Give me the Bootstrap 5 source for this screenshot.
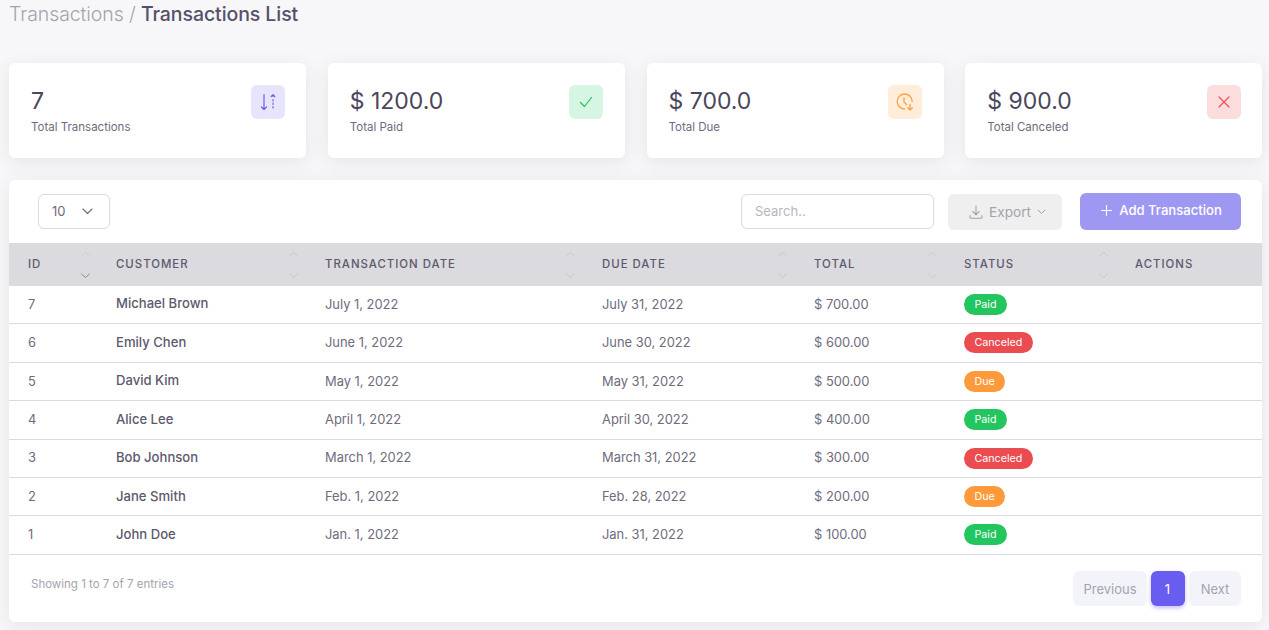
<!DOCTYPE html>
<html lang="en">
<head>
<meta charset="utf-8">
<title>Transactions List</title>
<link href="https://cdn.jsdelivr.net/npm/bootstrap@5.3.0/dist/css/bootstrap.min.css" rel="stylesheet">
<style>
html,body{height:630px;overflow:hidden}
body{background:#f7f7f9;font-family:"Inter","Liberation Sans",sans-serif;color:#4b465c;font-size:13px}
.page-wrap{padding:0 7px 0 9px}
.crumb{font-size:19.5px;font-weight:500;line-height:28px;margin:0 0 35px 0;color:#555168;letter-spacing:-.08px}
.crumb span{font-weight:300;color:#a5a3ae}
.stat-grid{display:grid;grid-template-columns:repeat(4,297px);gap:21.75px;margin-bottom:22px}
.stat-box,.list-box{background:#fff;border:0;border-radius:6px;box-shadow:0 4px 18px rgba(75,70,92,.1)}
.stat-box{height:95px;padding:22px 21.5px 22px 22px}
.stat-num{font-size:23px;line-height:30px;font-weight:400;color:#4b465c;margin-bottom:3px;margin-top:1px}
.stat-cap{font-size:11.5px;line-height:16px;color:#6f6b7d}
.stat-ico{width:34px;height:34px;border-radius:6px;display:flex;align-items:center;justify-content:center}
.ico-p{background:#e7e5fc;color:#6a5ff0}
.ico-g{background:#d6f5e3;color:#22c55e}
.ico-o{background:#ffecd9;color:#ff9f43}
.ico-r{background:#fbdddd;color:#ea5455}
.list-box{height:442px}
.tool-row{height:63px;padding:14px 21px 13px 29px}
.len-box{width:72px;height:35px;border:1px solid #dbdade;border-radius:6px;padding:0 16px 0 13px;color:#6f6b7d;font-size:13px}
.find-box{width:193px;height:35px;border:1px solid #dbdade;border-radius:6px;padding:0 13px 2px;font-size:13px;color:#4b465c;margin-right:14px;background:#fff;outline:0}
.find-box::placeholder{color:#b7b5be;opacity:1}
.exp-btn{width:114px;height:36px;background:#efefef;border:0;border-radius:6px;color:#a5a3ae;font-size:13.6px;margin-right:18px;font-weight:400;padding:0 0 0 4px;gap:5px}
.exp-chev{margin-left:1px}
.add-btn{width:161px;height:37px;background:#9f98f2;border:0;border-radius:6px;color:#fff;font-size:13.1px;font-weight:500;margin-top:-1px;padding:0 0 2px 2px;gap:7px}
.tx-table{table-layout:fixed;width:100%;margin:0;--bs-table-bg:transparent;color:#4b465c}
.tx-table th,.tx-table td{padding:0 19px;vertical-align:middle}
.tx-table thead th{background:#dbdade;height:42.6px;font-size:11.4px;font-weight:500;letter-spacing:1px;color:#5d596c;border:0;position:relative;text-transform:uppercase}
.tx-table tbody td{height:38.4px;font-size:12.9px;color:#6f6b7d;border-bottom:1px solid #dbdade;padding-bottom:.6px}
.tx-table tbody td.who{font-weight:500;color:#5d596c;font-size:13.1px}
.w1{width:88px}.w2{width:209px}.w3{width:277px}.w4{width:212px}.w5{width:150px}.w6{width:171px}
.sort-ico{position:absolute;right:7px;top:8px;width:11px;height:28px;color:#c9c7cf}
.tx-table thead th:first-child .sort-ico{right:6px}
.pill{display:inline-block;font-size:10.7px;font-weight:400;line-height:21px;height:21px;padding:0 10.5px;border-radius:11px;color:#fff;vertical-align:middle}
.pill-g{background:#22c55e}.pill-r{background:#ea4c50}.pill-o{background:#ff9a3c}
.foot-row{padding:16px 21px 0 22px}
.foot-note{font-size:11.5px;color:#a5a3ae;padding-top:5px}
.pg-btn{height:35px;border-radius:6px;background:#f3f4f9;color:#a5a3ae;font-size:13px;display:flex;align-items:center;justify-content:center;padding:2px 0 0;margin-left:4px;text-decoration:none}
.pg-prev{width:74px}.pg-next{width:52px}
.pg-btn.cur{background:#685dee;color:#fff;width:34px;padding:2px 1px 0 0;box-shadow:0 2px 4px rgba(104,93,238,.4);font-weight:400}
</style>
</head>
<body>
<div class="page-wrap">
  <h4 class="crumb"><span>Transactions /</span> Transactions List</h4>

  <div class="stat-grid">
    <div class="stat-box d-flex justify-content-between">
      <div><p class="stat-num">7</p><div class="stat-cap">Total Transactions</div></div>
      <div class="stat-ico ico-p"><svg width="18" height="20" viewBox="0 0 18 20" fill="none" stroke="currentColor" stroke-width="1.2" stroke-linecap="round" stroke-linejoin="round"><path d="M5 2.500v15M2.500 15 5 17.500 7.500 15"/><path d="M14 3v1.500M12.200 4.500 14 2.700l1.800 1.800"/><path d="M14 7.500v1.500M14 11v1.500M14 14.500V16"/></svg></div>
    </div>
    <div class="stat-box d-flex justify-content-between">
      <div><p class="stat-num">$ 1200.0</p><div class="stat-cap">Total Paid</div></div>
      <div class="stat-ico ico-g"><svg width="14" height="12" viewBox="0 0 14 12" fill="none" stroke="currentColor" stroke-width="1.2" stroke-linecap="round" stroke-linejoin="round"><path d="M1.500 6.500 5.500 10.500 12.500 1.500"/></svg></div>
    </div>
    <div class="stat-box d-flex justify-content-between">
      <div><p class="stat-num">$ 700.0</p><div class="stat-cap">Total Due</div></div>
      <div class="stat-ico ico-o"><svg width="20" height="20" viewBox="0 0 20 20" fill="none" stroke="currentColor" stroke-width="1.3" stroke-linecap="round" stroke-linejoin="round"><path d="M17.200 9.500A7.500 7.500 0 1 0 9.500 17"/><path d="M9 6v4l2.500 2.500"/><path d="M15 12.500V18M12.800 15.800 15 18l2.200-2.200"/></svg></div>
    </div>
    <div class="stat-box d-flex justify-content-between">
      <div><p class="stat-num">$ 900.0</p><div class="stat-cap">Total Canceled</div></div>
      <div class="stat-ico ico-r"><svg width="14" height="14" viewBox="0 0 14 14" fill="none" stroke="currentColor" stroke-width="1.3" stroke-linecap="round"><path d="M2 2l10 10M12 2 2 12"/></svg></div>
    </div>
  </div>

  <div class="list-box">
    <div class="tool-row d-flex align-items-start">
      <div class="len-box d-flex align-items-center justify-content-between">10 <svg width="11" height="7" viewBox="0 0 11 7" fill="none" stroke="currentColor" stroke-width="1.1" stroke-linecap="round" stroke-linejoin="round"><path d="M1 1l4.500 4.500L10 1"/></svg></div>
      <div class="ms-auto d-flex align-items-start">
        <input class="find-box" type="text" placeholder="Search..">
        <button class="exp-btn d-flex align-items-center justify-content-center" type="button"><svg width="16" height="16" viewBox="0 0 16 16" fill="none" stroke="currentColor" stroke-width="1.1" stroke-linecap="round" stroke-linejoin="round"><path d="M8 2v8.500M4.800 7.500 8 10.800l3.200-3.300M2 11.500v1.700A1 1 0 0 0 3 14.200h10a1 1 0 0 0 1-1v-1.700"/></svg>Export<svg class="exp-chev" width="9" height="6" viewBox="0 0 9 6" fill="none" stroke="currentColor" stroke-width="1" stroke-linecap="round" stroke-linejoin="round"><path d="M1 1l3.500 3.500L8 1"/></svg></button>
        <button class="add-btn d-flex align-items-center justify-content-center" type="button"><svg width="11" height="11" viewBox="0 0 11 11" fill="none" stroke="currentColor" stroke-width="1.1" stroke-linecap="round"><path d="M5.500 .5v10M.5 5.500h10"/></svg>Add Transaction</button>
      </div>
    </div>

    <table class="table tx-table">
      <colgroup><col class="w1"><col class="w2"><col class="w3"><col class="w4"><col class="w5"><col class="w6"><col></colgroup>
      <thead><tr>
        <th>ID<svg class="sort-ico" viewBox="0 0 11 28" fill="none" stroke-width="1" stroke-linecap="round" stroke-linejoin="round"><path stroke="#cfcdd5" d="M1.500 5 5.500 1.500 9.500 5"/><path stroke="#8f8c99" d="M1.500 23 5.500 26.500 9.500 23"/></svg></th>
        <th>Customer<svg class="sort-ico" viewBox="0 0 11 28" fill="none" stroke="currentColor" stroke-width="1" stroke-linecap="round" stroke-linejoin="round"><path d="M1.500 5 5.500 1.500 9.500 5M1.500 23 5.500 26.500 9.500 23"/></svg></th>
        <th>Transaction Date<svg class="sort-ico" viewBox="0 0 11 28" fill="none" stroke="currentColor" stroke-width="1" stroke-linecap="round" stroke-linejoin="round"><path d="M1.500 5 5.500 1.500 9.500 5M1.500 23 5.500 26.500 9.500 23"/></svg></th>
        <th>Due Date<svg class="sort-ico" viewBox="0 0 11 28" fill="none" stroke="currentColor" stroke-width="1" stroke-linecap="round" stroke-linejoin="round"><path d="M1.500 5 5.500 1.500 9.500 5M1.500 23 5.500 26.500 9.500 23"/></svg></th>
        <th>Total<svg class="sort-ico" viewBox="0 0 11 28" fill="none" stroke="currentColor" stroke-width="1" stroke-linecap="round" stroke-linejoin="round"><path d="M1.500 5 5.500 1.500 9.500 5M1.500 23 5.500 26.500 9.500 23"/></svg></th>
        <th>Status<svg class="sort-ico" viewBox="0 0 11 28" fill="none" stroke="currentColor" stroke-width="1" stroke-linecap="round" stroke-linejoin="round"><path d="M1.500 5 5.500 1.500 9.500 5M1.500 23 5.500 26.500 9.500 23"/></svg></th>
        <th>Actions</th>
      </tr></thead>
      <tbody>
        <tr><td>7</td><td class="who">Michael Brown</td><td>July 1, 2022</td><td>July 31, 2022</td><td>$ 700.00</td><td><span class="pill pill-g">Paid</span></td><td></td></tr>
        <tr><td>6</td><td class="who">Emily Chen</td><td>June 1, 2022</td><td>June 30, 2022</td><td>$ 600.00</td><td><span class="pill pill-r">Canceled</span></td><td></td></tr>
        <tr><td>5</td><td class="who">David Kim</td><td>May 1, 2022</td><td>May 31, 2022</td><td>$ 500.00</td><td><span class="pill pill-o">Due</span></td><td></td></tr>
        <tr><td>4</td><td class="who">Alice Lee</td><td>April 1, 2022</td><td>April 30, 2022</td><td>$ 400.00</td><td><span class="pill pill-g">Paid</span></td><td></td></tr>
        <tr><td>3</td><td class="who">Bob Johnson</td><td>March 1, 2022</td><td>March 31, 2022</td><td>$ 300.00</td><td><span class="pill pill-r">Canceled</span></td><td></td></tr>
        <tr><td>2</td><td class="who">Jane Smith</td><td>Feb. 1, 2022</td><td>Feb. 28, 2022</td><td>$ 200.00</td><td><span class="pill pill-o">Due</span></td><td></td></tr>
        <tr><td>1</td><td class="who">John Doe</td><td>Jan. 1, 2022</td><td>Jan. 31, 2022</td><td>$ 100.00</td><td><span class="pill pill-g">Paid</span></td><td></td></tr>
      </tbody>
    </table>

    <div class="foot-row d-flex justify-content-between align-items-start">
      <div class="foot-note">Showing 1 to 7 of 7 entries</div>
      <div class="d-flex">
        <a class="pg-btn pg-prev" href="#">Previous</a>
        <a class="pg-btn cur" href="#">1</a>
        <a class="pg-btn pg-next" href="#">Next</a>
      </div>
    </div>
  </div>
</div>
<script src="https://cdn.jsdelivr.net/npm/bootstrap@5.3.0/dist/js/bootstrap.bundle.min.js"></script>
</body>
</html>
